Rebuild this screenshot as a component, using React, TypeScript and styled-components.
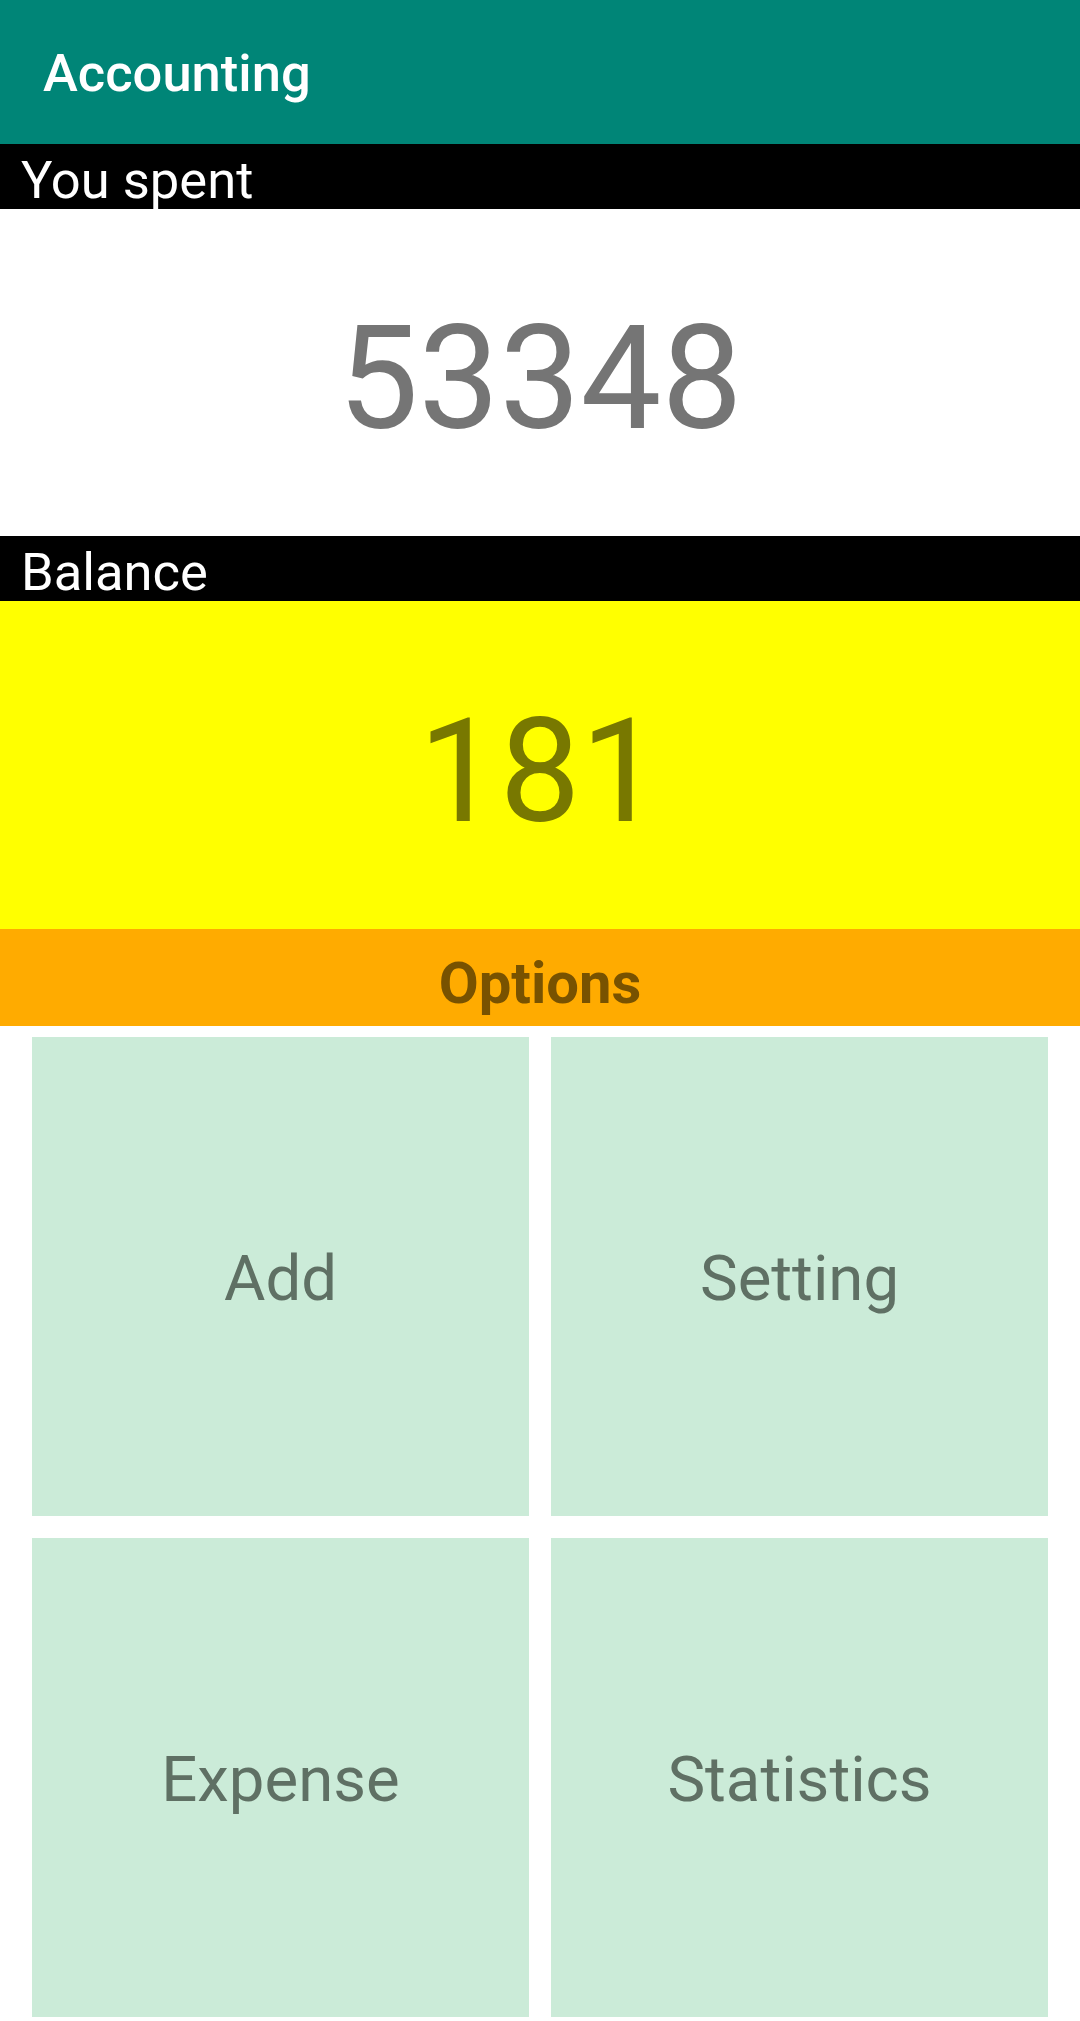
import React from "react";
import styled, { createGlobalStyle } from "styled-components";

const GlobalStyle = createGlobalStyle`
  html, body {
    margin: 0;
    padding: 0;
    background: #ffffff;
    font-family: Roboto, "Noto Sans", "Liberation Sans", sans-serif;
  }
  * { box-sizing: border-box; }
`;

const Screen = styled.div`
  width: 1080px;
  height: 2021px;
  display: flex;
  flex-direction: column;
  background: #ffffff;
  overflow: hidden;
`;

const AppBar = styled.header`
  height: 144px;
  flex: none;
  display: flex;
  align-items: center;
  padding: 2px 0 0 43px;
  background: #008577;
  color: #ffffff;
  font-size: 52.5px;
  font-weight: 500;
`;

const LabelBar = styled.div`
  height: 65px;
  flex: none;
  display: flex;
  align-items: flex-start;
  padding: 6px 0 0 21px;
  background: #000000;
  color: #ffffff;
  font-size: 52.5px;
  line-height: 61px;
`;

const ValuePanel = styled.div<{ $bg: string; $fg: string; $h: number }>`
  height: ${(p) => p.$h}px;
  flex: none;
  display: flex;
  align-items: center;
  justify-content: center;
  padding-top: 14px;
  background: ${(p) => p.$bg};
  color: ${(p) => p.$fg};
  font-size: 144px;
  line-height: 1.172;
`;

const OptionsBar = styled.div`
  height: 97px;
  flex: none;
  display: flex;
  align-items: center;
  justify-content: center;
  padding-top: 12px;
  background: #ffab00;
  color: #785200;
  font-size: 58px;
  font-weight: 700;
  line-height: 1.172;
`;

const OptionsGrid = styled.div`
  flex: none;
  display: grid;
  grid-template-columns: 1fr 1fr;
  grid-auto-rows: 479px;
  gap: 22px;
  padding: 11px 32px 4px;
`;

const OptionCard = styled.button`
  border: none;
  margin: 0;
  display: flex;
  align-items: center;
  justify-content: center;
  padding: 6px 0 0;
  background: #cbebd8;
  color: #5f7064;
  font-family: Roboto, "Noto Sans", "Liberation Sans", sans-serif;
  font-size: 63.5px;
  font-weight: 400;
  line-height: 1.172;
  cursor: pointer;
`;

const options = ["Add", "Setting", "Expense", "Statistics"];

export default function App() {
  return (
    <>
      <GlobalStyle />
      <Screen>
        <AppBar>Accounting</AppBar>
        <LabelBar>You spent</LabelBar>
        <ValuePanel $bg="#ffffff" $fg="#757575" $h={327}>
          53348
        </ValuePanel>
        <LabelBar>Balance</LabelBar>
        <ValuePanel $bg="#ffff00" $fg="#787800" $h={328}>
          181
        </ValuePanel>
        <OptionsBar>Options</OptionsBar>
        <OptionsGrid>
          {options.map((o) => (
            <OptionCard key={o}>{o}</OptionCard>
          ))}
        </OptionsGrid>
      </Screen>
    </>
  );
}
